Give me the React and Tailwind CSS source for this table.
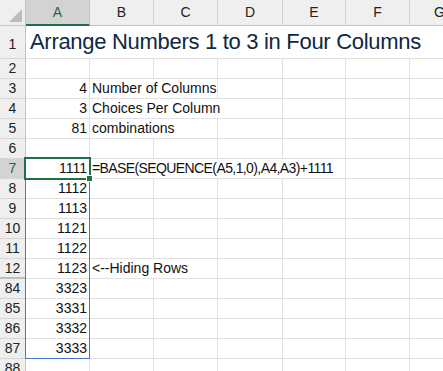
const cols = ['A', 'B', 'C', 'D', 'E', 'F', 'G']

// span = how many columns from B the overflow text covers (hides those gridlines)
const rows = [
  { n: 1, title: 'Arrange Numbers 1 to 3 in Four Columns' },
  { n: 2 },
  { n: 3, a: '4', b: 'Number of Columns', span: 2 },
  { n: 4, a: '3', b: 'Choices Per Column', span: 3 },
  { n: 5, a: '81', b: 'combinations', span: 2 },
  { n: 6 },
  { n: 7, a: '1111', b: '=BASE(SEQUENCE(A5,1,0),A4,A3)+1111', span: 4, tight: true },
  { n: 8, a: '1112' },
  { n: 9, a: '1113' },
  { n: 10, a: '1121' },
  { n: 11, a: '1122' },
  { n: 12, a: '1123', b: '<--Hiding Rows', span: 2, hidden: true },
  { n: 84, a: '3323' },
  { n: 85, a: '3331' },
  { n: 86, a: '3332' },
  { n: 87, a: '3333' },
  { n: 88 },
]

export default function App() {
  return (
    <div
      className="relative w-[443px] h-[371px] overflow-hidden bg-white text-[#111]"
      style={{ fontFamily: '"Liberation Sans", Arial, sans-serif' }}
    >
      <div className="grid grid-cols-[26px_64px_64px_64px_65px_63px_64px_60px] grid-rows-[26px_33px_repeat(16,20px)]">
        {/* corner */}
        <div className="flex items-end justify-end pr-[3px] pb-[3px] bg-[#efefef] border-r border-b border-[#c4c4c4]">
          <div className="w-0 h-0 border-l-[13px] border-l-transparent border-b-[13px] border-b-[#bdbdbd]" />
        </div>
        {cols.map((c) =>
          c === 'A' ? (
            <div key={c} className="flex items-center justify-center bg-[#d3d3d3] border-r border-[#c4c4c4] border-b-2 border-b-[#1e7145] text-[14px] text-[#1e6b40] pt-[1px]">
              {c}
            </div>
          ) : (
            <div key={c} className="flex items-center justify-center bg-[#efefef] border-r border-b border-[#d0d0d0] border-b-[#c4c4c4] text-[14px] text-[#222]">
              {c}
            </div>
          )
        )}

        {rows.map((r) => (
          <Row key={r.n} r={r} />
        ))}
      </div>

      {/* spill range outline */}
      <div className="absolute left-[25px] top-[158px] w-[65px] h-[201px] border border-[#4a78cc] pointer-events-none" />
      {/* active cell + fill handle */}
      <div className="absolute left-[24px] top-[157px] w-[67px] h-[23px] border-2 border-[#1e7145] pointer-events-none" />
      <div className="absolute left-[86px] top-[175px] w-[7px] h-[7px] bg-[#1e7145] border border-white" />
    </div>
  )
}

function Row({ r }) {
  const sel = r.n === 7
  const span = r.span || 1
  return (
    <>
      <div
        className={`flex items-center justify-center border-r border-[#c4c4c4] text-[14px] ${
          sel ? 'bg-[#d3d3d3] text-[#1e6b40]' : 'bg-[#efefef] text-[#222]'
        } ${r.hidden ? 'border-b-2 border-b-[#bdbdbd]' : 'border-b border-b-[#d6d6d6]'} ${r.title ? 'pt-[4px]' : ''}`}
      >
        {r.n}
      </div>
      {r.title ? (
        <>
          <div className="flex items-end pl-[4px] pb-[1px] border-b border-[#e1e1e1] overflow-visible">
            <span className="relative z-10 whitespace-nowrap text-[22px] tracking-[-0.3px] text-[#0e2841] leading-[30px]">
              {r.title}
            </span>
          </div>
          {[1, 2, 3, 4, 5, 6].map((i) => (
            <div key={i} className="border-b border-[#e1e1e1]" />
          ))}
        </>
      ) : (
        <>
          <div className="flex items-end justify-end pr-[2px] pb-[1px] border-r border-b border-[#e1e1e1] text-[14px] leading-[17px]">
            {r.a}
          </div>
          <div
            className={`flex items-end pl-[2px] pb-[1px] border-b border-[#e1e1e1] overflow-visible ${
              span > 1 ? '' : 'border-r'
            }`}
          >
            {r.b && (
              <span
                className={`relative z-10 whitespace-nowrap text-[14px] leading-[17px] ${r.tight ? 'tracking-[-0.6px]' : ''}`}
              >
                {r.b}
              </span>
            )}
          </div>
          {[2, 3, 4, 5, 6].map((i) => (
            <div
              key={i}
              className={`border-b border-[#e1e1e1] ${i < span ? '' : 'border-r'}`}
            />
          ))}
        </>
      )}
    </>
  )
}
